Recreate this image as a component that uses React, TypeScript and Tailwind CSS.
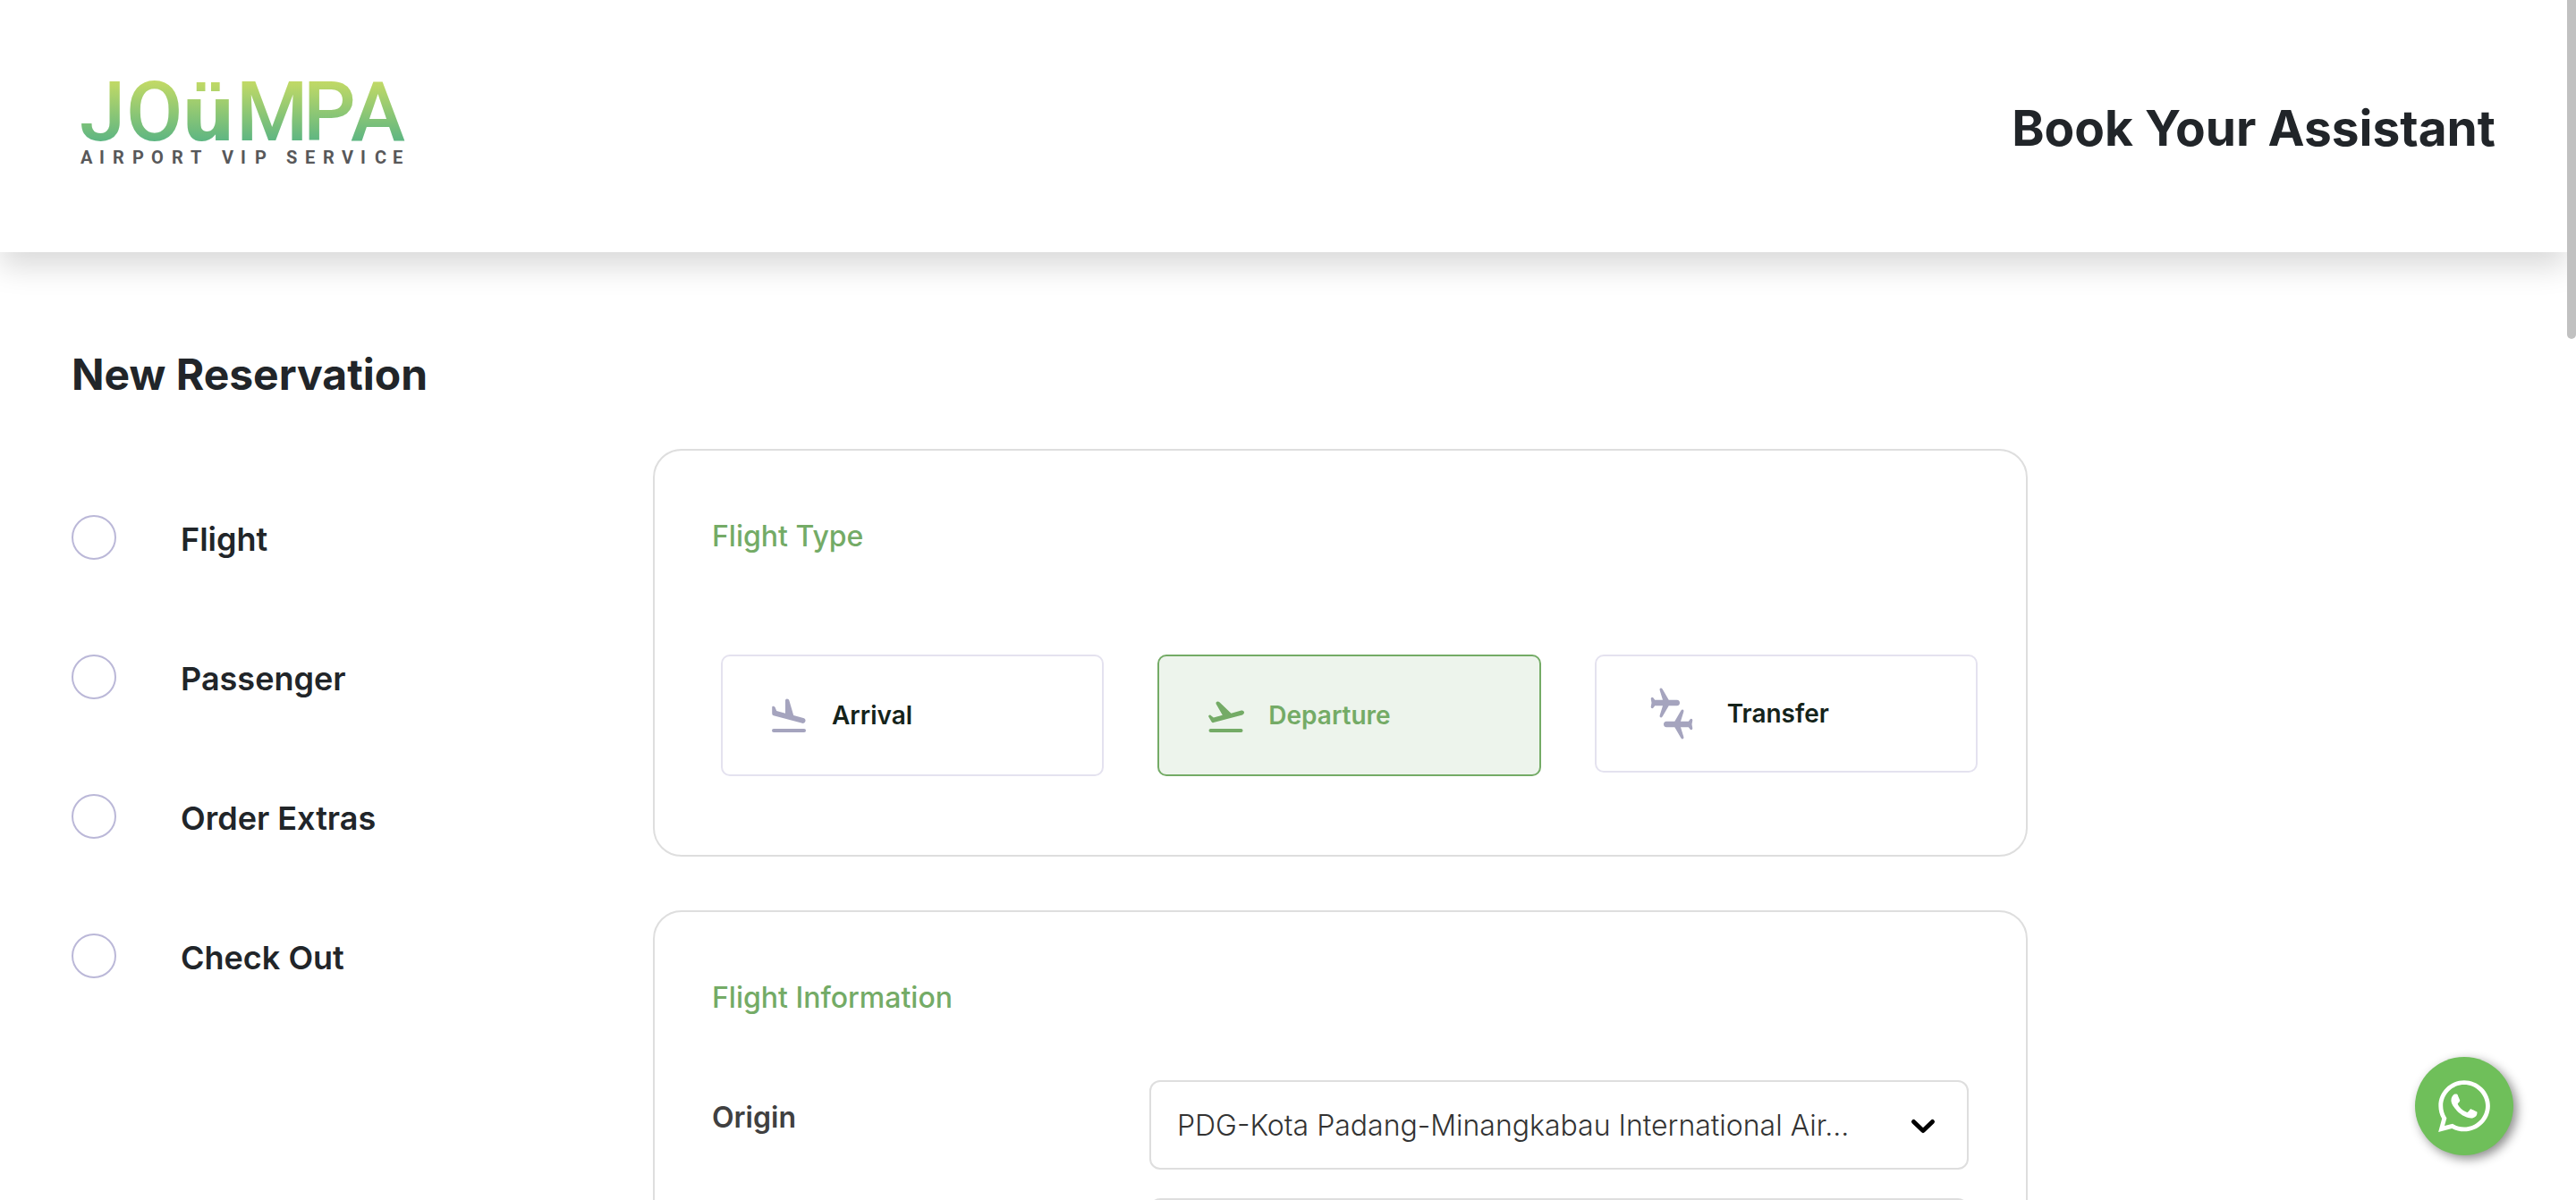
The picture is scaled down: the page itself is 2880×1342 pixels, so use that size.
import { useState } from "react";
import type { ReactNode } from "react";
import { FaWhatsapp } from "react-icons/fa";

const steps = ["Flight", "Passenger", "Order Extras", "Check Out"];

function Logo() {
  return (
    <svg width="400" height="178" viewBox="72 52 400 178" role="img" aria-label="Joumpa Airport VIP Service">
      <defs>
        <linearGradient id="leaf" gradientUnits="userSpaceOnUse" x1="0" y1="92" x2="0" y2="157">
          <stop offset="0" stopColor="#c0d966" />
          <stop offset="1" stopColor="#5fb682" />
        </linearGradient>
      </defs>
      <g fill="url(#leaf)" fontFamily="Roboto, sans-serif" fontWeight="500" fontSize="92">
        <text x="89 141" y="157">JO</text>
        <text x="203" y="157" fontFamily="'DejaVu Sans', sans-serif" fontWeight="700" fontSize="84">ü</text>
        <text x="264 339 392" y="157">MPA</text>
      </g>
      <text
        x="90 111 126 148 169 192 213 248 269 285 320 341 361 382 403 419 439"
        y="183"
        fill="#58585a"
        fontFamily="Roboto, sans-serif"
        fontWeight="700"
        fontSize="20"
      >
        AIRPORTVIPSERVICE
      </text>
    </svg>
  );
}

function ArrivalIcon() {
  return (
    <svg width="48" height="48" viewBox="858 775 48 48" fill="currentColor" aria-hidden="true">
      <rect x="863" y="814" width="38" height="4" rx="2" />
      <path d="M863.2 790q0-1.500 1.500-1.200 1.500.2 2 1.500l1.500 3.700 9.800 2.700v-14.200q0-1.900 1.900-1.900 2 0 2.500 1.900l4.800 16.600 11 3q2.700.9 2.300 3.400-.8 2.800-3.600 2.300l-32-8.600q-1.700-.5-1.700-2.200z" />
    </svg>
  );
}

function DepartureIcon() {
  return (
    <svg width="48" height="48" viewBox="1346 775 48 48" fill="currentColor" aria-hidden="true">
      <rect x="1351.500" y="814" width="38" height="4" rx="2" />
      <path d="M1351.200 800.500q-.5-1.300.8-1.800 1.200-.4 2.200.7l2.600 2.200 10-2.900-7.200-12.500q-.7-1.600.8-2.400 1.600-.8 3 .5l13 12.400 11.400-3.200q2.500-.4 3.200 1.800.4 2.400-1.900 3.300l-32.300 8.500q-1.600.3-2.400-1.200z" />
    </svg>
  );
}

function TransferIcon() {
  const plane =
    "M1845.700 781.500q0-1.700 1.500-1.700.8 0 1.300.8l1.700 2.200h8.800l-3.400-11q-.4-2.100 1.300-2.200 1.100 0 1.800 1.200l7 12h9.200q3.100.3 3.100 3.200t-3.100 3.200h-9.200l-7 12q-.7 1.200-1.800 1.200-1.700-.1-1.300-2.200l3.400-11h-8.800l-1.700 2.200q-.5.800-1.300.8-1.500 0-1.500-1.700l.8-4.500z";
  return (
    <svg width="72" height="60" viewBox="1835 768 72 60" fill="currentColor" aria-hidden="true">
      <path d={plane} />
      <path d={plane} transform="rotate(180 1869 798)" />
    </svg>
  );
}

const flightTypes: { name: string; height: string; icon: ReactNode }[] = [
  { name: "Arrival", height: "h-[136px]", icon: <ArrivalIcon /> },
  { name: "Departure", height: "h-[136px]", icon: <DepartureIcon /> },
  { name: "Transfer", height: "h-[132px]", icon: <TransferIcon /> },
];

function Card({ title, children }: { title: string; children: ReactNode }) {
  return (
    <section className="rounded-[32px] border-2 border-[#dedede] px-16 pt-[76px] pb-[88px]">
      <h2 className="text-[32px] leading-10 font-medium text-[#74ab66]">{title}</h2>
      {children}
    </section>
  );
}

function SelectField({ id, label, options }: { id: string; label: string; options: string[] }) {
  return (
    <div className="grid grid-cols-[489fr_916fr] items-start">
      <label htmlFor={id} className="mt-[22px] text-[32px] leading-10 font-semibold text-[#404040]">
        {label}
      </label>
      <div className="relative">
        <select
          id={id}
          className="h-[100px] w-full appearance-none rounded-xl border-2 border-[#dedede] bg-white pt-[2px] pr-[110px] pl-[29px] text-[32px] font-light text-[#333333]"
        >
          {options.map((o) => (
            <option key={o}>{o}</option>
          ))}
        </select>
        <svg
          className="pointer-events-none absolute top-[42px] right-[36px]"
          width="30"
          height="20"
          viewBox="0 0 30 20"
          fill="none"
          stroke="#000"
          strokeWidth="5"
          strokeLinecap="round"
          strokeLinejoin="round"
          aria-hidden="true"
        >
          <path d="M4.500 4.500 15 14.500 25.500 4.500" />
        </svg>
      </div>
    </div>
  );
}

export default function App() {
  const [selected, setSelected] = useState("Departure");

  return (
    <div className="relative h-screen overflow-hidden bg-white pr-[10px] font-['Inter',sans-serif] text-[#212529]">
      <header className="flex h-[282px] items-center justify-between bg-white pr-20 pl-[72px] shadow-[0_16px_32px_rgba(0,0,0,0.15)]">
        <Logo />
        <p className="pt-1 text-[55px] leading-[72px] font-bold">Book Your Assistant</p>
      </header>

      <main className="px-20 pt-[107px]">
        <h1 className="text-5xl leading-[60px] font-bold">New Reservation</h1>
        <div className="mt-[53px] grid grid-cols-[650fr_1537fr_523fr] items-start">
          <ol className="flex flex-col gap-[106px] pt-[74px]">
            {steps.map((s) => (
              <li key={s} className="flex h-[50px] items-center gap-[72px]">
                <span className="size-[50px] rounded-full border-2 border-[#bbb8d8]" />
                <span className="pt-1 text-4xl leading-[50px] font-semibold">{s}</span>
              </li>
            ))}
          </ol>

          <div className="flex flex-col gap-[60px]">
            <Card title="Flight Type">
              <div className="-mr-[10px] ml-[10px] mt-[112px] grid grid-cols-3 items-start gap-[60px]">
                {flightTypes.map((t) => (
                  <button
                    key={t.name}
                    type="button"
                    aria-pressed={selected === t.name}
                    onClick={() => setSelected(t.name)}
                    className={`flex items-center gap-6 rounded-[10px] border-2 pl-[50px] text-[28px] font-semibold ${t.height} ${
                      selected === t.name
                        ? "border-[#74ab66] bg-[#edf4ec] text-[#74ab66]"
                        : "border-[#e4e2ef] bg-white text-[#a5a4be]"
                    }`}
                  >
                    {t.icon}
                    <span className={selected === t.name ? "text-[#74ab66]" : "text-[#14231a]"}>{t.name}</span>
                  </button>
                ))}
              </div>
            </Card>

            <Card title="Flight Information">
              <div className="mt-[72px] flex flex-col gap-8">
                <SelectField
                  id="origin"
                  label="Origin"
                  options={["PDG-Kota Padang-Minangkabau International Air..."]}
                />
                <SelectField id="destination" label="Destination" options={["Select destination"]} />
              </div>
            </Card>
          </div>
        </div>
      </main>

      <a
        href="#whatsapp"
        aria-label="Chat on WhatsApp"
        className="absolute right-[70px] bottom-[50px] flex size-[110px] items-center justify-center rounded-full bg-[#6fbf5a] text-white shadow-[4px_4px_12px_rgba(0,0,0,0.45)]"
      >
        <FaWhatsapp size={66} />
      </a>
      <div className="absolute top-0 right-0 h-[379px] w-[10px] rounded-b-full bg-[#c1c1c1]" />
    </div>
  );
}
